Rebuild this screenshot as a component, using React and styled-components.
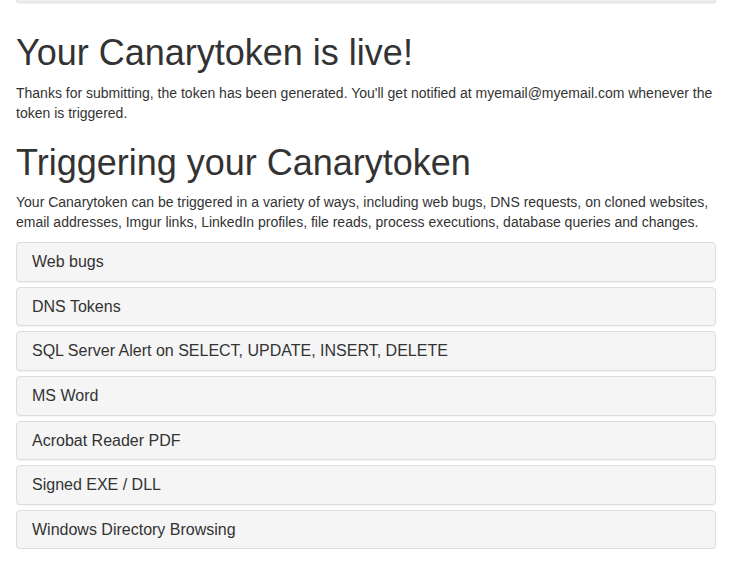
import React from 'react'
import styled, { createGlobalStyle } from 'styled-components'

const GlobalStyle = createGlobalStyle`
    html, body {
        margin: 0;
        padding: 0;
        background: #fff;
    }
    body {
        font-family: "Liberation Sans", Arial, Helvetica, sans-serif;
        font-size: 14px;
        line-height: 20px;
        color: #333;
    }
`

const Container = styled.div`
    padding: 0 17px 0 16px;
`

const PrevPanel = styled.div`
    height: 2px;
    background: #eeeeee;
    border: 1px solid #e3e3e3;
    border-top: none;
    border-radius: 0 0 4px 4px;
    box-shadow: 0 1px 1px rgba(0, 0, 0, 0.05);
`

const Heading = styled.h1`
    font-size: 36px;
    font-weight: 500;
    line-height: 1.1;
    margin: ${ props => props.first ? '30px' : '20px' } 0 10px;
`

const Lead = styled.p`
    margin: 0 0 10px;
`

const PanelGroup = styled.div`
    display: flex;
    flex-direction: column;
    gap: 5px;
    margin-top: 10px;
`

const Panel = styled.div`
    background: #f5f5f5;
    border: 1px solid #ddd;
    border-radius: 4px;
    box-shadow: 0 1px 1px rgba(0, 0, 0, 0.05);
    padding: 10px 15px;
`

const PanelTitle = styled.h4`
    margin: 0;
    font-size: 16px;
    font-weight: 500;
    line-height: 1.1;
    color: #333;
`

const triggers = [
    'Web bugs',
    'DNS Tokens',
    'SQL Server Alert on SELECT, UPDATE, INSERT, DELETE',
    'MS Word',
    'Acrobat Reader PDF',
    'Signed EXE / DLL',
    'Windows Directory Browsing',
]

export default function App() {
    return (
        <>
            <GlobalStyle />
            <Container>
                <PrevPanel />
                <Heading first>Your Canarytoken is live!</Heading>
                <Lead>
                    Thanks for submitting, the token has been generated. You'll get notified at myemail@myemail.com whenever the token is triggered.
                </Lead>
                <Heading as="h2">Triggering your Canarytoken</Heading>
                <Lead>
                    Your Canarytoken can be triggered in a variety of ways, including web bugs, DNS requests, on cloned websites, email addresses, Imgur links, LinkedIn profiles, file reads, process executions, database queries and changes.
                </Lead>
                <PanelGroup>
                    { triggers.map(t => (
                        <Panel key={ t }>
                            <PanelTitle>{ t }</PanelTitle>
                        </Panel>
                    )) }
                </PanelGroup>
            </Container>
        </>
    )
}
